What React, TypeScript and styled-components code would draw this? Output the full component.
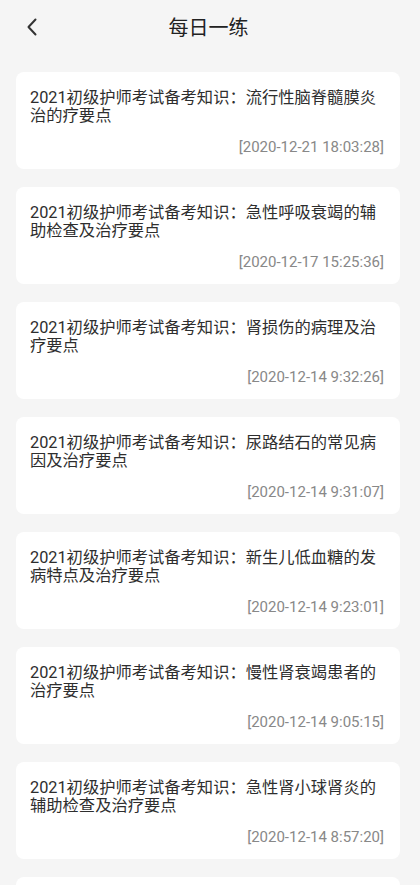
import React from 'react'
import styled, { createGlobalStyle } from 'styled-components'

const GlobalStyle = createGlobalStyle`
  html, body {
    margin: 0;
    padding: 0;
    overflow: hidden;
    background: #f5f5f5;
    font-family: Roboto, 'Noto Sans CJK SC', sans-serif;
  }
`

const Page = styled.div`
  width: 420px;
  height: 885px;
  overflow: hidden;
  background: #f5f5f5;
`

const Header = styled.div`
  height: 54px;
  display: flex;
  align-items: center;
  justify-content: center;
  position: relative;
`

const Back = styled.div`
  position: absolute;
  left: 20px;
  top: 14px;
  width: 24px;
  height: 26px;
  display: flex;
  align-items: center;
  justify-content: center;
  cursor: pointer;
`

const Title = styled.div`
  font-size: 20px;
  line-height: 28px;
  color: #222222;
  margin-left: -3px;
  font-family: 'Noto Sans CJK SC', sans-serif;
`

const List = styled.div`
  display: flex;
  flex-direction: column;
  gap: 18px;
  padding: 18px 20px 0 16px;
`

const Card = styled.div`
  background: #ffffff;
  border-radius: 8px;
  padding: 17px 16px 12px 14px;
  height: 97px;
  flex-shrink: 0;
  box-sizing: border-box;
  display: flex;
  flex-direction: column;
`

const CardTitle = styled.div`
  font-size: 16.3px;
  line-height: 18px;
  color: #2e2e2e;
  height: 36px;
  overflow: hidden;
`

const CardDate = styled.div`
  margin-top: auto;
  text-align: right;
  font-size: 15px;
  line-height: 20px;
  color: #888888;
  font-family: Roboto, sans-serif;
`

const items = [
  { title: '2021初级护师考试备考知识：流行性脑脊髓膜炎治的疗要点', date: '[2020-12-21 18:03:28]' },
  { title: '2021初级护师考试备考知识：急性呼吸衰竭的辅助检查及治疗要点', date: '[2020-12-17 15:25:36]' },
  { title: '2021初级护师考试备考知识：肾损伤的病理及治疗要点', date: '[2020-12-14 9:32:26]' },
  { title: '2021初级护师考试备考知识：尿路结石的常见病因及治疗要点', date: '[2020-12-14 9:31:07]' },
  { title: '2021初级护师考试备考知识：新生儿低血糖的发病特点及治疗要点', date: '[2020-12-14 9:23:01]' },
  { title: '2021初级护师考试备考知识：慢性肾衰竭患者的治疗要点', date: '[2020-12-14 9:05:15]' },
  { title: '2021初级护师考试备考知识：急性肾小球肾炎的辅助检查及治疗要点', date: '[2020-12-14 8:57:20]' },
]

const App: React.FC = () => {
  return (
    <Page>
      <GlobalStyle />
      <Header>
        <Back>
          <svg width="12" height="18" viewBox="0 0 12 18" fill="none">
            <path d="M9.5 1.5L2.5 9L9.5 16.5" stroke="#333333" strokeWidth="2" strokeLinecap="round" strokeLinejoin="round" />
          </svg>
        </Back>
        <Title>每日一练</Title>
      </Header>
      <List>
        {items.map((item) => (
          <Card key={item.date}>
            <CardTitle>{item.title}</CardTitle>
            <CardDate>{item.date}</CardDate>
          </Card>
        ))}
        {/* next item, only its top edge shows above the fold */}
        <Card />
      </List>
    </Page>
  )
}

export default App
